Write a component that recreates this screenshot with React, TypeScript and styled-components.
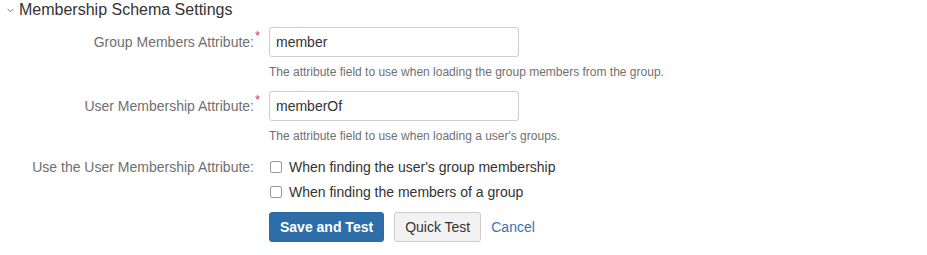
import styled, { createGlobalStyle } from 'styled-components';

const GlobalStyle = createGlobalStyle`
  body {
    margin: 0;
    background: #fff;
    font-family: 'Liberation Sans', Arial, sans-serif;
    color: #333;
  }
`;

const Page = styled.div`
  width: 927px;
  height: 255px;
`;

const Heading = styled.h3`
  display: flex;
  align-items: center;
  margin: 0;
  padding-left: 7px;
  height: 19px;
  font-size: 16px;
  font-weight: 400;
  color: #333;
`;

const Chevron = styled.svg`
  width: 7px;
  height: 5px;
  margin-right: 5px;
  margin-top: 2px;
`;

const Form = styled.div`
  display: grid;
  grid-template-columns: 254px 1fr;
  column-gap: 15px;
`;

const Label = styled.label<{ $top: number }>`
  text-align: right;
  font-size: 14px;
  color: #707070;
  padding-top: ${(p) => p.$top}px;
  line-height: 20px;
`;

const LabelText = styled.span`
  position: relative;
`;

const Required = styled.span`
  position: absolute;
  left: 100%;
  top: -5px;
  margin-left: 1px;
  color: #d04437;
  font-size: 13px;
  line-height: 14px;
`;

const Field = styled.div<{ $top: number }>`
  padding-top: ${(p) => p.$top}px;
`;

const Input = styled.input`
  box-sizing: border-box;
  width: 250px;
  height: 30px;
  padding: 0 6px;
  border: 1px solid #ccc;
  border-radius: 3px;
  font-family: inherit;
  font-size: 14px;
  color: #333;
  outline: none;
`;

const Help = styled.div`
  margin-top: 8px;
  font-size: 12px;
  line-height: 14px;
  color: #707070;
`;

const CheckRow = styled.label`
  display: flex;
  align-items: center;
  height: 25px;
  font-size: 14px;
  color: #333;
`;

const Box = styled.span`
  box-sizing: border-box;
  width: 12px;
  height: 12px;
  margin: 0 7px 0 1px;
  border: 1px solid #999;
  border-radius: 2px;
  background: #fff;
`;

const Buttons = styled.div`
  display: flex;
  align-items: center;
  gap: 10px;
  margin-top: 8px;
`;

const Button = styled.button<{ $primary?: boolean }>`
  box-sizing: border-box;
  height: 30px;
  padding: 0 10px;
  border-radius: 3px;
  font-family: inherit;
  font-size: 14px;
  border: 1px solid ${(p) => (p.$primary ? '#2a6aa7' : '#ccc')};
  background: ${(p) => (p.$primary ? '#2d6ea9' : '#f2f2f2')};
  color: ${(p) => (p.$primary ? '#fff' : '#333')};
  font-weight: ${(p) => (p.$primary ? 700 : 400)};
`;

const LinkButton = styled.a`
  font-size: 14px;
  color: #3b73af;
  text-decoration: none;
`;

export default function App() {
  return (
    <Page>
      <GlobalStyle />
      <Heading>
        <Chevron viewBox="0 0 7 5">
          <path d="M0.5 0.8 L3.5 3.8 L6.5 0.8" fill="none" stroke="#777" strokeWidth="1" />
        </Chevron>
        Membership Schema Settings
      </Heading>
      <Form>
        <Label $top={13}>
          <LabelText>
            Group Members Attribute:<Required>*</Required>
          </LabelText>
        </Label>
        <Field $top={8}>
          <Input defaultValue="member" />
          <Help>The attribute field to use when loading the group members from the group.</Help>
        </Field>
        <Label $top={17}>
          <LabelText>
            User Membership Attribute:<Required>*</Required>
          </LabelText>
        </Label>
        <Field $top={12}>
          <Input defaultValue="memberOf" />
          <Help>The attribute field to use when loading a user's groups.</Help>
        </Field>
        <Label $top={14}>Use the User Membership Attribute:</Label>
        <Field $top={11}>
          <CheckRow>
            <Box />
            When finding the user's group membership
          </CheckRow>
          <CheckRow>
            <Box />
            When finding the members of a group
          </CheckRow>
          <Buttons>
            <Button $primary>Save and Test</Button>
            <Button>Quick Test</Button>
            <LinkButton href="#">Cancel</LinkButton>
          </Buttons>
        </Field>
      </Form>
    </Page>
  );
}
